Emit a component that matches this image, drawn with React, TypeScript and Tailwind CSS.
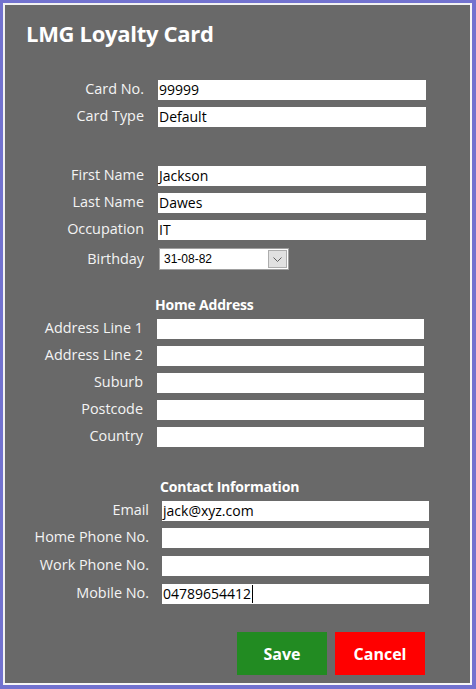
import React from "react";

const font = { fontFamily: '"Open Sans", "Noto Sans", sans-serif' };

function Row({
  label,
  value,
  labelW,
  gap,
  inputW,
  mt,
  caret,
}: {
  label: string;
  value?: string;
  labelW: string;
  gap: string;
  inputW: string;
  mt: string;
  caret?: boolean;
}) {
  return (
    <div className={`flex items-start h-[20px] ${mt}`}>
      <div className={`${labelW} text-right text-[14.4px] leading-[18px] text-[#f4f4f4] whitespace-nowrap`}>{label}</div>
      <div className={`${gap} ${inputW} h-[20px] bg-white flex items-center pl-[1px] text-[14px] leading-[20px] text-black`}>
        <span>{value}</span>
        {caret && <span className="inline-block w-[1px] h-[18px] bg-black ml-[1px]" />}
      </div>
    </div>
  );
}

export default function App() {
  return (
    <div className="w-[476px] h-[689px] bg-[#7272cf] pt-[3px] pl-[3px] pr-[4px] pb-[4px]" style={font}>
      <div className="w-full h-full border-t-2 border-l-2 border-r-2 border-b-2 border-t-[#f2f2f2] border-l-[#f2f2f2] border-r-[#f6f6f6] border-b-[#f6f6f6] bg-[#696969]">
        <div className="pt-[13px] pl-[21px] h-[30px] box-content">
          <div className="text-[22px] leading-[30px] font-bold text-white tracking-[-0.3px]">LMG Loyalty Card</div>
        </div>

        {/* Card section */}
        <div className="mt-[32px]">
          <Row label="Card No." value="99999" labelW="w-[139px]" gap="ml-[14px]" inputW="w-[268px]" mt="mt-0" />
          <Row label="Card Type" value="Default" labelW="w-[139px]" gap="ml-[14px]" inputW="w-[268px]" mt="mt-[7px]" />
        </div>

        {/* Personal section */}
        <div className="mt-[39px]">
          <Row label="First Name" value="Jackson" labelW="w-[139px]" gap="ml-[14px]" inputW="w-[268px]" mt="mt-0" />
          <Row label="Last Name" value="Dawes" labelW="w-[139px]" gap="ml-[14px]" inputW="w-[268px]" mt="mt-[7px]" />
          <Row label="Occupation" value="IT" labelW="w-[139px]" gap="ml-[14px]" inputW="w-[268px]" mt="mt-[7px]" />
          <div className="flex items-center h-[22px] mt-[8px]">
            <div className="w-[139px] text-right text-[14.4px] leading-[20px] text-[#f4f4f4]">Birthday</div>
            <div className="ml-[15px] w-[130px] h-[22px] bg-white border border-[#a0a0a0] flex items-center justify-between">
              <span className="pl-[4px] text-[12px] text-black" style={{ fontFamily: '"Liberation Sans", Arial, sans-serif' }}>
                31-08-82
              </span>
              <div className="mr-[1px] w-[19px] h-[18px] bg-[#e1e1e1] border border-[#adadad] flex items-center justify-center">
                <svg width="9" height="5" viewBox="0 0 9 5">
                  <path d="M0.5 0.5 L4.5 4.5 L8.5 0.5" fill="none" stroke="#606060" strokeWidth="1" />
                </svg>
              </div>
            </div>
          </div>
        </div>

        {/* Home Address */}
        <div className="mt-[25px]">
          <div className="pl-[150px] text-[14px] leading-[20px] font-bold text-white tracking-[-0.2px]">Home Address</div>
          <Row label="Address Line 1" labelW="w-[138px]" gap="ml-[14px]" inputW="w-[267px]" mt="mt-[4px]" />
          <Row label="Address Line 2" labelW="w-[138px]" gap="ml-[14px]" inputW="w-[267px]" mt="mt-[7px]" />
          <Row label="Suburb" labelW="w-[138px]" gap="ml-[14px]" inputW="w-[267px]" mt="mt-[7px]" />
          <Row label="Postcode" labelW="w-[138px]" gap="ml-[14px]" inputW="w-[267px]" mt="mt-[7px]" />
          <Row label="Country" labelW="w-[138px]" gap="ml-[14px]" inputW="w-[267px]" mt="mt-[7px]" />
        </div>

        {/* Contact */}
        <div className="mt-[30px]">
          <div className="pl-[155px] text-[14px] leading-[20px] font-bold text-white tracking-[-0.2px]">Contact Information</div>
          <Row label="Email" value="jack@xyz.com" labelW="w-[144px]" gap="ml-[13px]" inputW="w-[267px]" mt="mt-[4px]" />
          <Row label="Home Phone No." labelW="w-[144px]" gap="ml-[13px]" inputW="w-[267px]" mt="mt-[7px]" />
          <Row label="Work Phone No." labelW="w-[144px]" gap="ml-[13px]" inputW="w-[267px]" mt="mt-[8px]" />
          <Row label="Mobile No." value="04789654412" labelW="w-[144px]" gap="ml-[13px]" inputW="w-[267px]" mt="mt-[8px]" caret />
        </div>

        <div className="mt-[28px] flex pl-[232px] gap-[8px]">
          <button className="w-[90px] h-[43px] bg-[#228b22] text-white font-bold text-[16px]">Save</button>
          <button className="w-[90px] h-[43px] bg-[#ff0000] text-white font-bold text-[16px]">Cancel</button>
        </div>
      </div>
    </div>
  );
}
